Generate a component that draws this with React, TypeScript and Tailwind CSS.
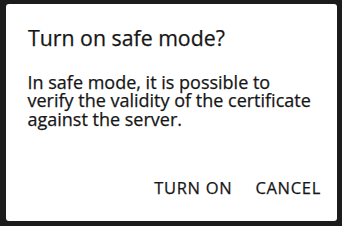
export default function App() {
  return (
    <div className="w-[342px] h-[226px] bg-[#1c1c1c] pt-[4px] pl-[6px] pr-[5px] pb-[5px]" style={{ fontFamily: '"Open Sans", "Noto Sans", sans-serif' }}>
      <div className="h-full bg-white rounded-[3px] flex flex-col text-[#161616] [-webkit-text-stroke:0.25px]">
        {/* Title */}
        <h1 className="pl-[22px] pt-[20px] text-[21.3px] leading-[28px]">Turn on safe mode?</h1>

        {/* Body */}
        <div className="pl-[21.5px] mt-[20.7px] text-[18px] whitespace-nowrap">
          <div className="leading-[18.8px]">In safe mode, it is possible to</div>
          <div className="leading-[18.8px]">verify the validity of the certificate</div>
          <div className="leading-[18.8px]">against the server.</div>
        </div>

        {/* Actions */}
        <div className="mt-auto mb-[23.4px] flex justify-end gap-[23px] pr-[16px] text-[16.5px] leading-[20px] tracking-[0.7px]">
          <button>TURN ON</button>
          <button>CANCEL</button>
        </div>
      </div>
    </div>
  );
}
